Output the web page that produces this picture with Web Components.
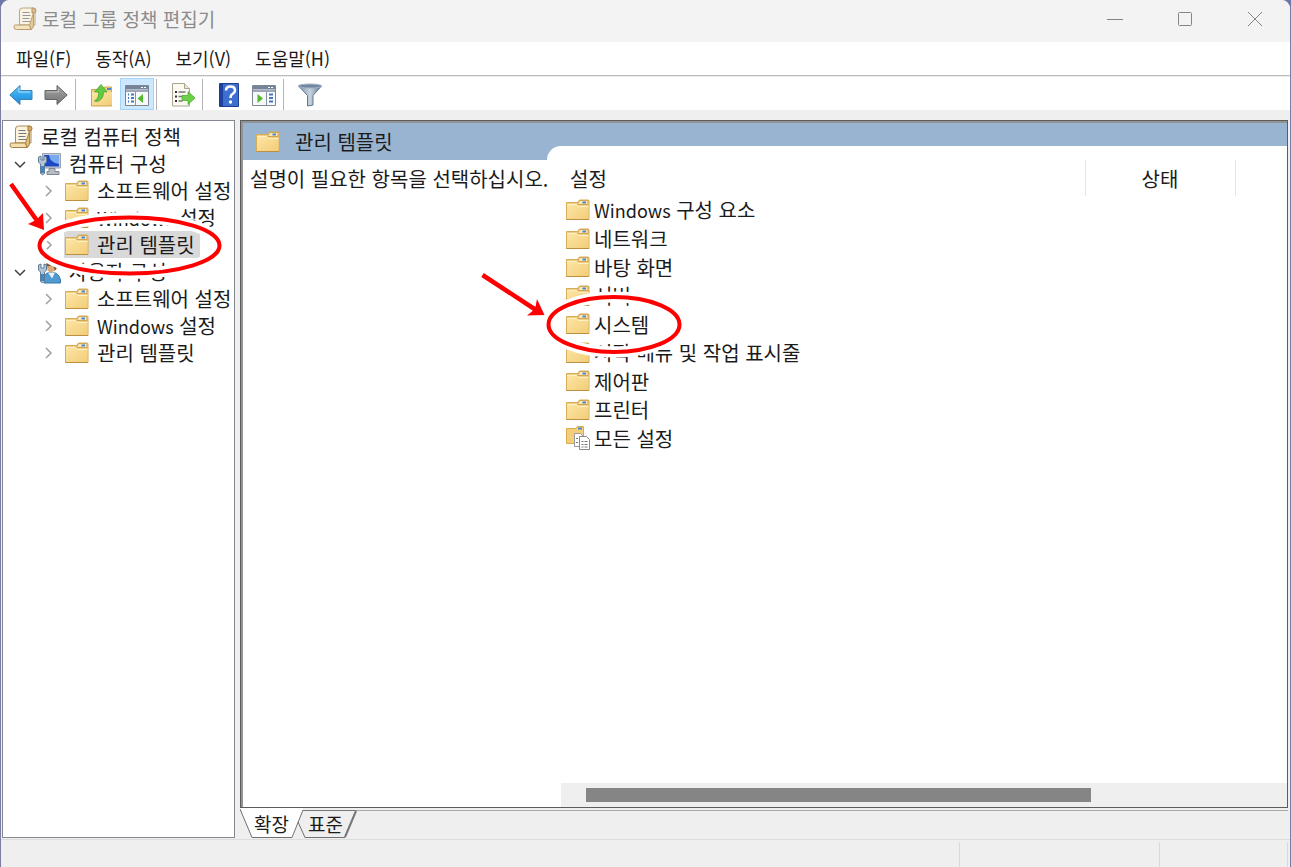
<!DOCTYPE html>
<html lang="ko">
<head>
<meta charset="UTF-8">
<meta name="viewport" content="width=device-width, initial-scale=1.0">
<title>로컬 그룹 정책 편집기</title>
<style>
  html, body {
    margin: 0;
    height: 100%;
  }
  body {
    background: #6f77a6;
    color: #1b1b1b;
    font-family: "Noto Sans CJK KR", "Noto Sans", sans-serif;
    font-size: 20px;
    line-height: 27px;
  }
  .latin {
    font-size: 18px;
  }
</style>
</head>
<body>
<policy-editor>
  <title-bar slot="title">로컬 그룹 정책 편집기</title-bar>

  <menu-bar slot="menu">
    <menu-entry>파일(F)</menu-entry>
    <menu-entry>동작(A)</menu-entry>
    <menu-entry>보기(V)</menu-entry>
    <menu-entry>도움말(H)</menu-entry>
  </menu-bar>

  <tool-bar slot="tools">
    <tool-button icon="back" label="뒤로"></tool-button>
    <tool-button icon="forward" label="앞으로"></tool-button>
    <tool-separator></tool-separator>
    <tool-button icon="up" label="한 수준 위로"></tool-button>
    <tool-button icon="tree" label="콘솔 트리 표시" pressed></tool-button>
    <tool-separator></tool-separator>
    <tool-button icon="export" label="목록 내보내기"></tool-button>
    <tool-separator></tool-separator>
    <tool-button icon="help" label="도움말"></tool-button>
    <tool-button icon="actions" label="작업 창 표시"></tool-button>
    <tool-separator></tool-separator>
    <tool-button icon="filter" label="필터"></tool-button>
  </tool-bar>

  <policy-tree slot="tree">
    <tree-item icon="scroll">로컬 컴퓨터 정책
      <tree-item slot="children" icon="computer" state="open">컴퓨터 구성
        <tree-item slot="children" icon="folder" state="closed">소프트웨어 설정</tree-item>
        <tree-item slot="children" icon="folder" state="closed"><span class="latin">Windows</span> 설정</tree-item>
        <tree-item slot="children" icon="folder" state="closed" selected>관리 템플릿</tree-item>
      </tree-item>
      <tree-item slot="children" icon="user" state="open">사용자 구성
        <tree-item slot="children" icon="folder" state="closed">소프트웨어 설정</tree-item>
        <tree-item slot="children" icon="folder" state="closed"><span class="latin">Windows</span> 설정</tree-item>
        <tree-item slot="children" icon="folder" state="closed">관리 템플릿</tree-item>
      </tree-item>
    </tree-item>
  </policy-tree>

  <result-pane slot="result">
    <span slot="heading">관리 템플릿</span>
    <span slot="description">설명이 필요한 항목을 선택하십시오.</span>
    <settings-list></settings-list>
  </result-pane>

  <view-tabs slot="tabs"></view-tabs>
  <status-bar slot="status"></status-bar>
</policy-editor>
<callout-marks></callout-marks>

<script>
const FOLDER = `
  <path d="M.5 4.500h11l2 -2.500h8.500q1 0 1 1v18.500h-22.500z" fill="#f0cf80" stroke="#d6ac58"/>
  <path d="M13.500 2.500h8.500v4h-10.500z" fill="#f7e7ba" stroke="#d2a654"/>
  <path d="M16.500 4.500h3.500" stroke="#4a86d2" stroke-width="2"/>
  <path d="M1 6h9.500l2 2h10v13h-21.500z" fill="url(#fold)"/>
  <path d="M1 6.500h9.500l2 2h10" fill="none" stroke="#fff0c4"/>
  <path d="M.5 21.500h22.500" stroke="#bd9040"/>`;

const SCROLL = `
  <path d="M6.500 4q0 -3 3 -3h10q2.500 0 2.500 3v14h-15.500z" fill="#fbf3da" stroke="#a98d5c"/>
  <path d="M19 1h1.500q2.500 0 2.500 2.500t-2.500 2.500h-1.500z" fill="#d9ae67" stroke="#9b763d"/>
  <path d="M20.500 6v12q0 4 -3 4.500l-1 -4.500z" fill="#e3bd7c" stroke="#a98145"/>
  <path d="M2.500 18h13q1.500 0 1.500 2t1.500 2.500h-15q-2.500 0 -2.500 -2.500t1.500 -2z" fill="#f5dfae" stroke="#a47d40"/>
  <path d="M9.500 5.500h7M9.500 8.500h8M9.500 11.500h7M9.500 14.500h8" stroke="#77778a"/>`;

const WRENCH = `
  <path d="M1.500 5v5l2 2v9.500q2 2.500 4 0v-9.500l2 -2v-5l-2.500 -1v4h-3v-4z" fill="#b3c6d8" stroke="#5f7c99"/>
  <path d="M4 14h3v7h-3z" fill="#3f86c8"/>`;

const WINDOW_FRAME = `
  <path d="M.5 2.500h23v20h-23z" fill="#f8f9fa" stroke="#7d8794"/>
  <path d="M1 3h22v3.500h-22z" fill="#76849b"/>
  <path d="M1 8h22" stroke="#9da7b5" stroke-width="2"/>
  <path d="M16 4.500h2M19 4.500h2" stroke="#fff"/>`;

const ICONS = {
  folder: FOLDER,
  scroll: SCROLL,
  computer: `
    <path d="M5.500 1.500h18v14.500h-18z" fill="#c8ced6" stroke="#98a2b0"/>
    <path d="M7 3h15v11.500h-15z" fill="#1c48c2"/>
    <path d="M12 3h10v9q-9 -1 -10 -9z" fill="#78a9f0"/>
    <path d="M12 16.500h6v3h4v3h-12v-3h2z" fill="#b6bcc4" stroke="#7e8792"/>
    ${WRENCH}`,
  user: `
    <path d="M7 23v-5q1 -6 8 -6q7 1 8.500 8v3z" fill="#4f9bd0" stroke="#3775a8"/>
    <path d="M11 12.500l4 6l3 -6z" fill="#e8f2f8"/>
    <ellipse cx="14" cy="7.500" rx="4" ry="5" fill="#dcaa78"/>
    <path d="M9 6q0 -5.500 5.500 -5.500q6 1 5 8.500l-2 2q0 -5 -3 -6q-2 2 -5.500 1z" fill="#7d552a"/>
    ${WRENCH}`,
  allsettings: `
    <path d="M.5 2.500h9l2 -2h6v17h-17z" fill="#f3cf7c" stroke="#d9ab4c"/>
    <path d="M12 2.500h4" stroke="#4a86d2" stroke-width="2"/>
    <path d="M8.500 7.500h6l3 3v10h-9z" fill="#fff" stroke="#999"/>
    <path d="M13.500 10.500h7l3 3v10h-10z" fill="#fff" stroke="#888"/>
    <path d="M15.500 15.500h2M18.500 15.500h3M15.500 18.500h2M18.500 18.500h3M15.500 21h2M18.500 21h3M10 12.500h2M10 16.500h2" stroke="#777"/>`,
  back: `
    <path d="M.8 12L11 2.500v5h12v9h-12v5z" fill="url(#blue)" stroke="#3b82b5" stroke-linejoin="round"/>
    <path d="M10 5v4h11" fill="none" stroke="#a5e0fb"/>`,
  forward: `
    <path d="M23.200 12L13 2.500v5h-12v9h12v5z" fill="url(#gray)" stroke="#646464" stroke-linejoin="round"/>
    <path d="M2.500 9h12v-3" fill="none" stroke="#bdbdbd"/>`,
  up: `
    <path d="M1.500 6.500h11l2 -2.500h7v19h-20z" fill="#f0cf80" stroke="#cfa350"/>
    <path d="M2 9h20v13h-20z" fill="url(#fold)"/>
    <path d="M17 6h4" stroke="#4a86d2" stroke-width="2"/>
    <path d="M4.500 18q5 -3 4 -9h-4l6.500 -7.500l6 7.500h-3.500q0 8 -6.500 9.500z" fill="#63cb3f" stroke="#3f9f2d" stroke-width=".7"/>`,
  tree: `
    ${WINDOW_FRAME}
    <path d="M10.500 9v13" stroke="#8793a4"/>
    <path d="M3 11.500h1M6 11.500h3M3 15h1M6 15h3M3 18.500h1M6 18.500h3" stroke="#4379bd" stroke-width="2"/>
    <path d="M12.500 15.500l5.500 -4.500v9z" fill="#52b92d"/>`,
  actions: `
    ${WINDOW_FRAME}
    <path d="M14.500 9v13" stroke="#8793a4"/>
    <path d="M17 11.500h4M17 15h4M17 18.500h4" stroke="#4379bd" stroke-width="2"/>
    <path d="M11 15.500l-5.500 -4.500v9z" fill="#52b92d"/>`,
  export: `
    <path d="M1.500 .5h12l5 5v17.500h-17z" fill="#fcfaf2" stroke="#aaa58f"/>
    <path d="M13.500 .5v5h5" fill="#e8e3d3" stroke="#aaa58f"/>
    <path d="M4 9h2M4 13.500h2M4 18h2" stroke="#333" stroke-width="2"/>
    <path d="M7.500 9h7M7.500 13.500h4M7.500 18h4" stroke="#7a7a7a" stroke-width="1.500"/>
    <path d="M11 12.500h6v-4l7 6.500l-7 6.500v-4h-6z" fill="#6bcf48" stroke="#43a52b" stroke-width=".7"/>`,
  help: `
    <path d="M2.500 .5h19v23h-19z" fill="#3e6fcf" stroke="#1d3d91"/>
    <path d="M3 1h3v22h-3z" fill="#1e439f"/>
    <path d="M9 7.500q0 -4 4.500 -4q4.500 0 4.500 4q0 2 -2.500 3.500q-2 1 -2 4" fill="none" stroke="#fff" stroke-width="2.500"/>
    <circle cx="13.500" cy="19" r="1.700" fill="#fff"/>`,
  filter: `
    <path d="M.5 3h23l-8.500 9.500v9.500l-5.500 1v-10.500z" fill="url(#steel)" stroke="#65788d"/>
    <ellipse cx="12" cy="3" rx="11.500" ry="2" fill="#71879f" stroke="#a2b1c1"/>`
};

function define(name, html) {
  customElements.define(name, class extends HTMLElement {
    constructor() {
      super();
      this.attachShadow({ mode: 'open' });
    }

    connectedCallback() {
      this.shadowRoot.innerHTML = typeof html === 'function' ? html(this) : html;
    }
  });
}

define('mmc-icon', el => `
  <style>
    :host { display: block; flex: none; width: 24px; height: 24px; }
    svg { display: block; width: 100%; height: 100%; }
  </style>
  <svg viewBox="0 0 24 24" aria-hidden="true">
    <defs>
      <linearGradient id="fold" x2="1" y2="1"><stop stop-color="#fde6a6"/><stop offset="1" stop-color="#f2cd78"/></linearGradient>
      <linearGradient id="blue" x2="0" y2="1"><stop stop-color="#72cdf8"/><stop offset=".5" stop-color="#31a4ec"/><stop offset="1" stop-color="#2388d3"/></linearGradient>
      <linearGradient id="gray" x2="0" y2="1"><stop stop-color="#a5a5a5"/><stop offset="1" stop-color="#747474"/></linearGradient>
      <linearGradient id="steel"><stop stop-color="#7a91a9"/><stop offset=".5" stop-color="#c7d4e0"/><stop offset="1" stop-color="#5e7892"/></linearGradient>
    </defs>
    ${ICONS[el.getAttribute('name')] || ''}
  </svg>
`);

define('policy-editor', `
  <style>
    :host {
      display: flex;
      flex-direction: column;
      box-sizing: border-box;
      min-height: 100vh;
      border: solid #7c7ca8;
      border-width: 0 1px;
      border-radius: 9px 9px 0 0;
      overflow: hidden;
      background: #efefef;
    }
    .workspace {
      flex: 1;
      display: grid;
      grid-template-columns: 233px minmax(0, 1fr);
      gap: 5px;
      padding: 10px 2px 1px 1px;
    }
    .result {
      display: flex;
      flex-direction: column;
    }
  </style>
  <slot name="title"></slot>
  <slot name="menu"></slot>
  <slot name="tools"></slot>
  <main class="workspace">
    <slot name="tree"></slot>
    <div class="result">
      <slot name="result"></slot>
      <slot name="tabs"></slot>
    </div>
  </main>
  <slot name="status"></slot>
`);

define('title-bar', `
  <style>
    :host {
      display: flex;
      height: 42px;
      padding-left: 12px;
      background: #f3f3f3;
      color: #8b8b8b;
    }
    mmc-icon { opacity: .75; margin: 7px 5px 0 0; }
    h1 { flex: 1; margin: 0; font-size: 19px; font-weight: 400; line-height: 37px; }
    button {
      display: grid;
      place-items: center;
      width: 70px;
      height: 37px;
      padding: 0;
      border: 0;
      background: none;
    }
    svg { width: 16px; height: 16px; fill: none; stroke: #858585; }
  </style>
  <mmc-icon name="scroll"></mmc-icon>
  <h1><slot></slot></h1>
  <button aria-label="최소화"><svg viewBox="0 0 16 16"><path d="M0 8.500h16"/></svg></button>
  <button aria-label="최대화"><svg viewBox="0 0 16 16"><rect x="1.500" y="1.500" width="13" height="13" rx="1"/></svg></button>
  <button aria-label="닫기"><svg viewBox="0 0 16 16"><path d="M1 1l14 14M15 1L1 15"/></svg></button>
`);

define('menu-bar', `
  <style>
    :host {
      display: flex;
      gap: 24px;
      height: 33px;
      padding-left: 15px;
      background: #fff;
      border-bottom: 1px solid #bcbcbc;
    }
  </style>
  <slot></slot>
`);

define('menu-entry', `
  <style>
    :host { display: flex; }
    button {
      padding: 0;
      border: 0;
      background: none;
      color: inherit;
      font: inherit;
      font-size: 18px;
    }
  </style>
  <button><slot></slot></button>
`);

define('tool-bar', `
  <style>
    :host {
      display: flex;
      align-items: center;
      gap: 1px;
      height: 34px;
      padding: 1px 0 0 3px;
      background: #fff;
      border-top: 1px solid #ececec;
      box-sizing: border-box;
    }
  </style>
  <slot></slot>
`);

define('tool-button', el => `
  <style>
    :host { display: block; }
    button {
      display: grid;
      place-items: center;
      box-sizing: border-box;
      width: 34px;
      height: 32px;
      padding: 1px 0 0;
      border: 1px solid transparent;
      background: none;
    }
    button[aria-pressed="true"] { background: #cce8ff; border-color: #a5d5fa; }
  </style>
  <button aria-label="${el.getAttribute('label')}" aria-pressed="${el.hasAttribute('pressed')}">
    <mmc-icon name="${el.getAttribute('icon')}"></mmc-icon>
  </button>
`);

define('tool-separator', `
  <style>
    :host { display: block; width: 1px; height: 31px; margin: 0 8px 0 1px; background: #b4b4b4; }
  </style>
`);

define('policy-tree', `
  <style>
    :host {
      display: block;
      box-sizing: border-box;
      padding: 2px 0 0 5px;
      background: #fff;
      border: 1px solid #828790;
      overflow: hidden;
    }
  </style>
  <div role="tree"><slot></slot></div>
`);

const CHEVRONS = {
  open: '<path d="M1 4l5 5l5 -5" stroke="#404040"/>',
  closed: '<path d="M4 1l5 5l-5 5" stroke="#a0a0a0"/>'
};

define('tree-item', el => `
  <style>
    :host { display: block; }
    .row { display: flex; height: 27px; white-space: nowrap; }
    .toggle {
      display: grid;
      place-items: center;
      flex: none;
      width: 24px;
      margin-left: -28px;
      margin-right: 4px;
      padding: 0;
      border: 0;
      background: none;
    }
    .toggle svg { width: 12px; height: 12px; fill: none; stroke-width: 1.5; }
    .label {
      display: flex;
      flex: none;
      align-items: center;
      gap: 8px;
      padding: 0 5px 0 1px;
    }
    :host([selected]) .label { background: #d9d9d9; }
    .children { padding-left: 28px; }
  </style>
  <div class="row">
    ${el.hasAttribute('state') ? `<button class="toggle" aria-label="확장/축소"><svg viewBox="0 0 12 12">${CHEVRONS[el.getAttribute('state')]}</svg></button>` : ''}
    <div class="label"><mmc-icon name="${el.getAttribute('icon')}"></mmc-icon><span><slot></slot></span></div>
  </div>
  <div class="children"><slot name="children"></slot></div>
`);

define('result-pane', `
  <style>
    :host {
      flex: 1;
      display: grid;
      grid-template-columns: 304px minmax(0, 1fr);
      border: 1px solid #5c5c5c;
      box-shadow: inset 2px 2px #939393;
      padding: 2px 0 0 2px;
      background: #99b4d1;
      background-clip: content-box;
    }
    .info { display: flex; flex-direction: column; }
    header {
      display: flex;
      align-items: center;
      gap: 15px;
      height: 37px;
      padding-left: 13px;
    }
    h2 { margin: 0; font-size: 20px; font-weight: 400; }
    p { flex: 1; margin: 0; padding: 5px 0 0 7px; background: #fff; white-space: nowrap; }
    .list {
      display: flex;
      margin-top: 23px;
      border-radius: 14px 0 0 0;
      background: #fff;
    }
  </style>
  <section class="info">
    <header><mmc-icon name="folder"></mmc-icon><h2><slot name="heading"></slot></h2></header>
    <p><slot name="description"></slot></p>
  </section>
  <section class="list"><slot></slot></section>
`);

const SETTINGS = [
  ['folder', '<span class="latin">Windows</span> 구성 요소'],
  ['folder', '네트워크'],
  ['folder', '바탕 화면'],
  ['folder', '서버'],
  ['folder', '시스템'],
  ['folder', '시작 메뉴 및 작업 표시줄'],
  ['folder', '제어판'],
  ['folder', '프린터'],
  ['allsettings', '모든 설정']
];

define('settings-list', `
  <style>
    :host {
      flex: 1;
      display: flex;
      flex-direction: column;
      justify-content: space-between;
      padding-top: 14px;
    }
    table { width: 100%; border-collapse: collapse; table-layout: fixed; }
    th { height: 36px; padding: 0; font-weight: 400; }
    th:first-child { padding-left: 23px; text-align: left; }
    th + th { width: 150px; border: solid #e5e5e5; border-width: 0 1px; box-sizing: border-box; }
    th.rest { width: 52px; border: 0; }
    td { height: 28px; padding: 0 0 0 19px; }
    tr:nth-child(even) td { height: 29px; }
    .name { display: flex; align-items: center; gap: 4px; }
    .latin { font-size: 18px; }
    .scroll {
      display: flex;
      align-items: center;
      height: 24px;
      margin-left: 14px;
      padding-left: 25px;
      background: #efefef;
    }
    .thumb { width: 72%; height: 14px; background: #858585; }
  </style>
  <table>
    <thead><tr><th>설정</th><th>상태</th><th class="rest"></th></tr></thead>
    <tbody>
      ${SETTINGS.map(([icon, name]) => `<tr><td><div class="name"><mmc-icon name="${icon}"></mmc-icon><span>${name}</span></div></td><td></td><td></td></tr>`).join('')}
    </tbody>
  </table>
  <div class="scroll"><div class="thumb"></div></div>
`);

define('view-tabs', `
  <style>
    :host {
      display: flex;
      height: 30px;
      background: linear-gradient(#a8a8a8, #a8a8a8) 0 2px / 100% 1px no-repeat;
    }
    button {
      position: relative;
      width: 63px;
      padding: 0;
      border: 0;
      background: none;
      color: inherit;
      font: inherit;
      font-size: 19px;
    }
    button + button { margin-left: -9px; }
    svg { position: absolute; inset: 0; width: 100%; height: 100%; }
    span { position: relative; }
  </style>
  <button aria-pressed="true">
    <svg viewBox="0 0 63 30"><path d="M0 0L12 29.500H52L63 3V0z" fill="#fff"/><path d="M0 1L12 29.500H52L63 2" fill="none" stroke="#707070"/></svg>
    <span>확장</span>
  </button>
  <button aria-pressed="false">
    <svg viewBox="0 0 63 30"><path d="M4 14L11 29.500H51" fill="none" stroke="#707070"/><path d="M9 2.500H62L51 29.500" fill="none" stroke="#777"/><path d="M62 3L51 29" stroke="#777" stroke-width="2"/></svg>
    <span>표준</span>
  </button>
`);

define('status-bar', `
  <style>
    :host {
      display: grid;
      grid-template-columns: 1fr 199px 127px 1px;
      gap: 1px;
      height: 25px;
      padding-top: 2px;
      border-top: 1px solid #dcdcdc;
    }
    i { border-right: 1px solid #dadada; }
    i:last-child { border: 0; }
  </style>
  <i></i><i></i><i></i><i></i>
`);

// hand-drawn circles and arrows that float over the window
define('callout-marks', `
  <style>
    :host {
      position: absolute;
      top: 0;
      left: 0;
      width: 700px;
      height: 400px;
      pointer-events: none;
    }
    svg { display: block; }
  </style>
  <svg width="700" height="400" viewBox="0 0 700 400" aria-hidden="true">
    <g fill="none" stroke="#fff" stroke-width="11">
      <ellipse cx="129.500" cy="245.500" rx="90" ry="28"/>
      <ellipse cx="614" cy="324.500" rx="65.500" ry="27.500"/>
    </g>
    <g fill="none" stroke="#fe0000" stroke-width="4">
      <ellipse cx="129.500" cy="245.500" rx="90" ry="28"/>
      <ellipse cx="614" cy="324.500" rx="65.500" ry="27.500"/>
      <path d="M11 184L38 222M482.500 275L536 310" stroke-width="4.500"/>
    </g>
    <g fill="#fe0000">
      <path d="M44 230L28 224L36 220L43 213z"/>
      <path d="M544.500 315L527 315.500L535 309L537 299z"/>
    </g>
  </svg>
`);
</script>
</body>
</html>
